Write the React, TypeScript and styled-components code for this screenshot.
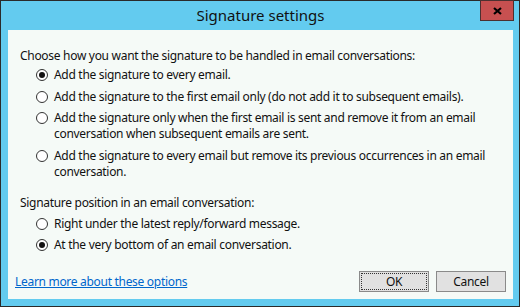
import { createGlobalStyle } from 'styled-components'
import styled from 'styled-components'

const GlobalStyle = createGlobalStyle`
  html, body {
    margin: 0;
    padding: 0;
    background: #ffffff;
  }
  body {
    font-family: 'Noto Sans', 'Open Sans', sans-serif;
  }
`

interface option {
  id: string
  lines: string[]
  checked?: boolean
}

const handlingOptions: option[] = [
  { id: 'every', lines: ['Add the signature to every email.'], checked: true },
  {
    id: 'first',
    lines: ['Add the signature to the first email only (do not add it to subsequent emails).']
  },
  {
    id: 'remove',
    lines: [
      'Add the signature only when the first email is sent and remove it from an email',
      'conversation when subsequent emails are sent.'
    ]
  },
  {
    id: 'previous',
    lines: [
      'Add the signature to every email but remove its previous occurrences in an email',
      'conversation.'
    ]
  }
]

const positionOptions: option[] = [
  { id: 'under', lines: ['Right under the latest reply/forward message.'] },
  { id: 'bottom', lines: ['At the very bottom of an email conversation.'], checked: true }
]

function RadioRow({ item }: { item: option }) {
  return (
    <Row>
      <Radio $checked={!!item.checked} />
      <Label>
        {item.lines.map((line, i) => (
          <span key={i}>
            {line}
            {i < item.lines.length - 1 && <br />}
          </span>
        ))}
      </Label>
    </Row>
  )
}

export default function App() {
  return (
    <>
      <GlobalStyle />
      <Window>
        <TitleBar>
          <Title>Signature settings</Title>
          <CloseButton type="button" aria-label="Close">
            <svg width="9" height="8" viewBox="0 0 9 8">
              <path d="M1 1 L8 7 M8 1 L1 7" stroke="#000" strokeWidth="2.2" />
            </svg>
          </CloseButton>
        </TitleBar>
        <Panel>
          <Heading $top={18}>Choose how you want the signature to be handled in email conversations:</Heading>
          <OptionList $top={3}>
            {handlingOptions.map((o) => (
              <RadioRow key={o.id} item={o} />
            ))}
          </OptionList>
          <Heading $top={15}>Signature position in an email conversation:</Heading>
          <OptionList $top={5}>
            {positionOptions.map((o) => (
              <RadioRow key={o.id} item={o} />
            ))}
          </OptionList>
          <Footer>
            <HelpLink href="#">Learn more about these options</HelpLink>
            <Buttons>
              <DialogButton type="button" $focused>
                OK
              </DialogButton>
              <DialogButton type="button">Cancel</DialogButton>
            </Buttons>
          </Footer>
        </Panel>
      </Window>
    </>
  )
}

const Window = styled.div`
  box-sizing: border-box;
  width: 520px;
  height: 307px;
  background: #63cbef;
  border: 1px solid #2a2a2a;
  display: flex;
  flex-direction: column;
  padding: 0 6px 7px 7px;
`

const TitleBar = styled.div`
  position: relative;
  height: 29px;
  flex-shrink: 0;
  display: flex;
  align-items: center;
  justify-content: center;
`

const Title = styled.span`
  font-size: 15px;
  color: #111;
  margin-top: -1px;
`

const CloseButton = styled.button`
  position: absolute;
  top: -1px;
  right: -1px;
  box-sizing: border-box;
  width: 34px;
  height: 21px;
  padding: 0;
  background: #c75050;
  border: 1px solid #4c3030;
  display: flex;
  align-items: center;
  justify-content: center;
`

const Panel = styled.div`
  flex: 1;
  background: #f5faf7;
  display: flex;
  flex-direction: column;
  padding: 0 7px 7px 12px;
  font-size: 12px;
  letter-spacing: -0.3px;
  color: #111;
  line-height: 16px;
`

const Heading = styled.div<{ $top: number }>`
  margin-top: ${(p) => p.$top}px;
`

const OptionList = styled.div<{ $top: number }>`
  display: flex;
  flex-direction: column;
  gap: 5.5px;
  margin-top: ${(p) => p.$top}px;
  padding-left: 16px;
`

const Row = styled.div`
  display: flex;
  align-items: flex-start;
  gap: 6px;
`

const Radio = styled.span<{ $checked: boolean }>`
  box-sizing: border-box;
  width: 12px;
  height: 12px;
  margin-top: 2px;
  border-radius: 50%;
  border: 1px solid #333;
  background: #fff;
  flex-shrink: 0;
  display: flex;
  align-items: center;
  justify-content: center;

  &::after {
    content: '';
    width: 6px;
    height: 6px;
    border-radius: 50%;
    background: #111;
    display: ${(p) => (p.$checked ? 'block' : 'none')};
  }
`

const Label = styled.span`
  display: block;
`

const Footer = styled.div`
  margin-top: auto;
  display: flex;
  align-items: center;
  justify-content: space-between;
  padding-left: 3px;
  margin-left: -8px;
`

const HelpLink = styled.a`
  color: #0066cc;
  text-decoration: underline;
  margin-top: 1px;
`

const Buttons = styled.div`
  display: flex;
  gap: 7px;
`

const DialogButton = styled.button<{ $focused?: boolean }>`
  box-sizing: border-box;
  width: 70px;
  height: 21px;
  padding: 0;
  font-family: inherit;
  font-size: 12px;
  letter-spacing: -0.3px;
  color: #111;
  background: #e1e1e1;
  border: 1px solid #8a8a8a;
  outline: ${(p) => (p.$focused ? '1px dotted #333' : 'none')};
  outline-offset: -3px;
`
